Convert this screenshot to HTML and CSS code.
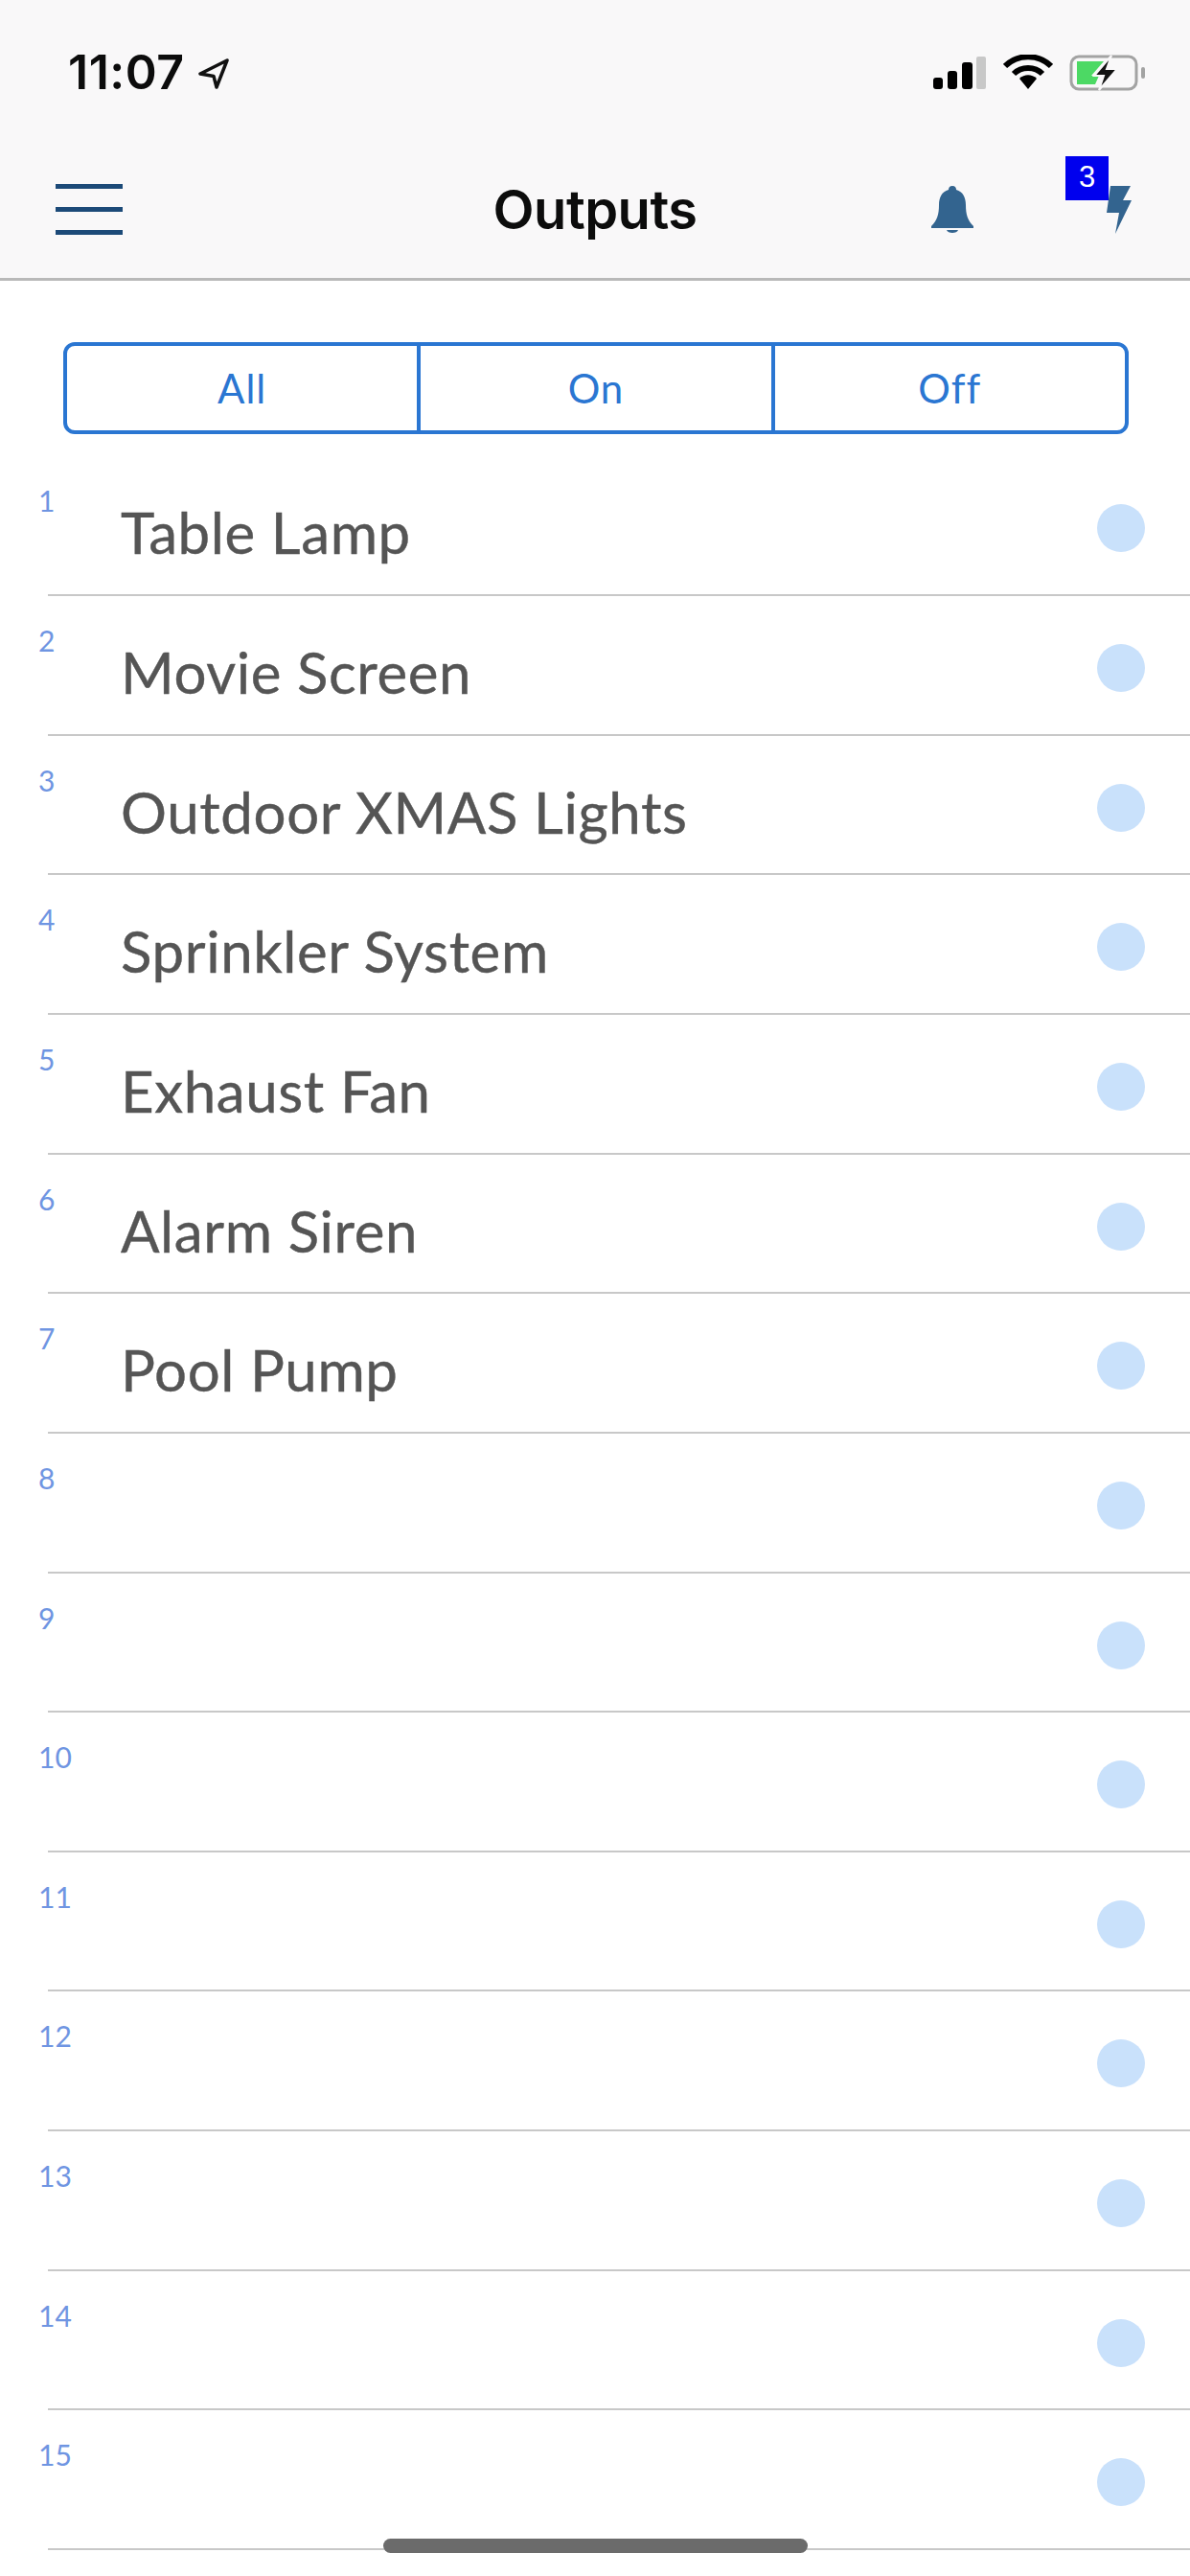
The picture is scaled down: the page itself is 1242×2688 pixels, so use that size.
FILE: index.html
```html
<!DOCTYPE html>
<html lang="en">
<head>
    <meta charset="UTF-8">
    <meta name="viewport" content="width=device-width, initial-scale=1.0">
    <title>Outputs</title>
    <link rel="stylesheet" href="styles.css">
</head>
<body>
    <header class="top">
        <div class="status">
            <div class="status-left">
                <span class="time">11:07</span>
                <svg class="loc" width="34" height="33" viewBox="0 0 34 33">
                    <path d="M31 3 L3 17 L17 19.500 L20 31 Z" fill="none" stroke="#111" stroke-width="3.500" stroke-linejoin="round"/>
                </svg>
            </div>
            <div class="status-right">
                <svg width="56" height="34" viewBox="0 0 56 34">
                    <rect x="0" y="22" width="10" height="12" rx="3" fill="#000"/>
                    <rect x="15" y="15" width="10" height="19" rx="3" fill="#000"/>
                    <rect x="30" y="6" width="11" height="28" rx="3" fill="#000"/>
                    <rect x="45" y="0" width="10" height="34" rx="2" fill="#c8c8c8"/>
                </svg>
                <svg width="52" height="36" viewBox="0 0 52 36">
                    <path d="M2 12 C15 -1 37 -1 50 12" fill="none" stroke="#000" stroke-width="6"/>
                    <path d="M11 20 C19 12 33 12 41 20" fill="none" stroke="#000" stroke-width="6"/>
                    <path d="M17 25 C22 20 30 20 35 25 L26 36 Z" fill="#000"/>
                </svg>
                <svg width="80" height="38" viewBox="0 0 80 38">
                    <rect x="2" y="2" width="68" height="34" rx="8" fill="none" stroke="#a3a3a3" stroke-width="3"/>
                    <path d="M8 7 H36 L23 22 H31 L27 31 H8 Z" fill="#4cd964"/>
                    <path d="M44 1 L26 22 H36 L31 37 L50 15 H39 Z" fill="#111" stroke="#f9f8f9" stroke-width="2"/>
                    <rect x="75" y="13" width="4" height="12" rx="2" fill="#a3a3a3"/>
                </svg>
            </div>
        </div>
        <nav class="nav">
            <div class="menu">
                <span></span>
                <span></span>
                <span></span>
            </div>
            <h1>Outputs</h1>
            <div class="nav-icons">
                <svg width="44" height="50" viewBox="0 0 44 50">
                    <path d="M22 0 C25 0 26 2 26 4 C33 6 36 12 36 20 C36 30 38 36 44 42 V44 H0 V42 C6 36 8 30 8 20 C8 12 11 6 18 4 C18 2 19 0 22 0 Z" fill="#33648f"/>
                    <path d="M16 46 H28 C27 50 17 50 16 46 Z" fill="#33648f"/>
                </svg>
                <div class="bolt">
                    <svg width="26" height="50" viewBox="0 0 26 50">
                        <path d="M4 0 H25 L17 15 H26 L9 50 L13 28 H0 Z" fill="#33648f"/>
                    </svg>
                    <span class="badge">3</span>
                </div>
            </div>
        </nav>
    </header>

    <div class="tabs">
        <div class="tab">All</div>
        <div class="tab">On</div>
        <div class="tab">Off</div>
    </div>

    <ul class="outputs">
        <li class="row"><span class="num">1</span><span class="name">Table Lamp</span><span class="dot"></span></li>
        <li class="row"><span class="num">2</span><span class="name">Movie Screen</span><span class="dot"></span></li>
        <li class="row"><span class="num">3</span><span class="name">Outdoor XMAS Lights</span><span class="dot"></span></li>
        <li class="row"><span class="num">4</span><span class="name">Sprinkler System</span><span class="dot"></span></li>
        <li class="row"><span class="num">5</span><span class="name">Exhaust Fan</span><span class="dot"></span></li>
        <li class="row"><span class="num">6</span><span class="name">Alarm Siren</span><span class="dot"></span></li>
        <li class="row"><span class="num">7</span><span class="name">Pool Pump</span><span class="dot"></span></li>
        <li class="row"><span class="num">8</span><span class="name"></span><span class="dot"></span></li>
        <li class="row"><span class="num">9</span><span class="name"></span><span class="dot"></span></li>
        <li class="row"><span class="num">10</span><span class="name"></span><span class="dot"></span></li>
        <li class="row"><span class="num">11</span><span class="name"></span><span class="dot"></span></li>
        <li class="row"><span class="num">12</span><span class="name"></span><span class="dot"></span></li>
        <li class="row"><span class="num">13</span><span class="name"></span><span class="dot"></span></li>
        <li class="row"><span class="num">14</span><span class="name"></span><span class="dot"></span></li>
        <li class="row"><span class="num">15</span><span class="name"></span><span class="dot"></span></li>
    </ul>

    <div class="home-bar"></div>
</body>
</html>
```

FILE: styles.css
```css
html, body {
    margin: 0;
    height: 2688px;
    overflow: hidden;
}
body {
    position: relative;
    background-color: #fff;
    font-family: Lato, "Open Sans", sans-serif;
}
.top {
    background-color: #f9f8f9;
    border-bottom: 3px solid #b9b9b9;
    height: 293px;
    box-sizing: border-box;
}
.status {
    height: 130px;
    padding: 0 46px 0 71px;
    box-sizing: border-box;
    display: flex;
    justify-content: space-between;
    align-items: flex-start;
}
.status-left {
    display: flex;
    align-items: center;
    gap: 13px;
    padding-top: 47px;
}
.time {
    font-family: Inter, sans-serif;
    font-size: 50px;
    line-height: 56px;
    font-weight: 600;
    letter-spacing: 0.5px;
    color: #0c0c0c;
}
.loc {
    margin-top: 2px;
}
.status-right {
    display: flex;
    align-items: flex-start;
    gap: 17px;
    padding-top: 57px;
}
.status-right svg:first-child {
    margin-top: 2px;
}
.nav {
    height: 160px;
    display: grid;
    grid-template-columns: 1fr auto 1fr;
    align-items: start;
}
.menu {
    width: 70px;
    margin: 62px 0 0 58px;
    display: flex;
    flex-direction: column;
    gap: 19px;
}
.menu span {
    height: 5px;
    background-color: #1c4a78;
}
.nav h1 {
    margin: 57px 0 0;
    font-family: Inter, sans-serif;
    font-size: 56px;
    line-height: 64px;
    font-weight: 600;
    letter-spacing: -0.5px;
    color: #0c0c0c;
}
.nav-icons {
    display: flex;
    justify-content: flex-end;
    align-items: flex-start;
    gap: 139px;
    padding: 64px 61px 0 0;
}
.bolt {
    position: relative;
    height: 50px;
}
.badge {
    position: absolute;
    left: -43px;
    top: -31px;
    width: 45px;
    height: 46px;
    background-color: #0000ee;
    color: #fff;
    font-family: "Liberation Sans", sans-serif;
    font-size: 31px;
    line-height: 44px;
    text-align: center;
}
.tabs {
    margin: 64px 0 0 66px;
    width: 1112px;
    height: 96px;
    box-sizing: border-box;
    border: 4px solid #2a76d2;
    border-radius: 12px;
    display: flex;
}
.tab {
    flex: 1;
    text-align: center;
    font-size: 42px;
    line-height: 88px;
    letter-spacing: 1px;
    color: #2a76d2;
}
.tab + .tab {
    border-left: 4px solid #2a76d2;
}
.outputs {
    list-style: none;
    margin: 23.4px 0 0 50px;
    padding: 0;
}
.row {
    height: 145.65px;
    box-sizing: border-box;
    border-bottom: 2px solid #c8c8c8;
    padding-right: 47px;
    display: flex;
    align-items: flex-start;
}
.num {
    width: 86px;
    margin-left: -10px;
    padding-top: 26px;
    font-size: 30px;
    line-height: 40px;
    color: #6f95e2;
}
.name {
    flex: 1;
    padding-top: 43px;
    font-size: 60px;
    line-height: 72px;
    letter-spacing: 0.6px;
    color: #555;
    -webkit-text-stroke: 0.4px #555;
}
.dot {
    width: 50px;
    height: 50px;
    margin-top: 50px;
    border-radius: 50%;
    background-color: #c9e1fb;
}
.home-bar {
    position: absolute;
    left: 400px;
    bottom: 24px;
    width: 443px;
    height: 15px;
    border-radius: 8px;
    background-color: #6b6b6b;
}
```
